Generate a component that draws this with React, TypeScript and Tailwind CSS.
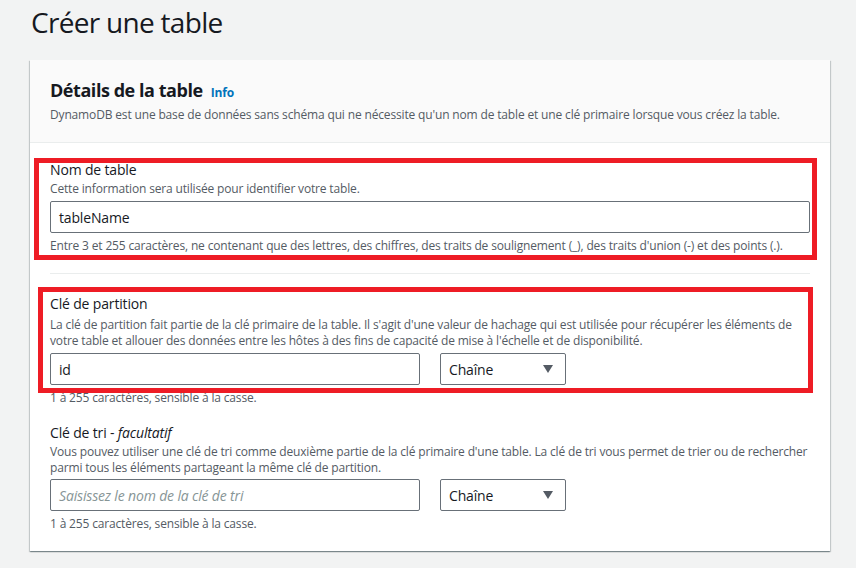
import React from "react";

const font = { fontFamily: '"Open Sans", "Noto Sans", sans-serif' };

function Caret() {
  return (
    <svg width="10" height="8" viewBox="0 0 10 8" className="shrink-0">
      <path d="M0 0 L10 0 L5 8 Z" fill="#545b64" />
    </svg>
  );
}

function Select() {
  return (
    <div className="ml-5 flex h-[32px] w-[126px] items-center justify-between rounded-[2px] border border-[#687078] bg-white pl-[8px] pr-[12px] text-[14px] text-[#16191f]">
      <span>Chaîne</span>
      <Caret />
    </div>
  );
}

export default function App() {
  return (
    <div
      className="relative h-[568px] w-[856px] overflow-hidden bg-[#f2f3f3] pl-[30px] tracking-[-0.01em] text-[#16191f]"
      style={font}
    >
      <h1 className="pl-[1px] text-[28px] leading-[44px] font-normal tracking-[-0.025em] text-[#16191f]">Créer une table</h1>

      <div className="mt-[16px] w-[800px] bg-white shadow-[0_1px_1px_0_rgba(0,28,36,0.3),1px_1px_1px_0_rgba(0,28,36,0.15),-1px_1px_1px_0_rgba(0,28,36,0.15)]">
        <div className="border-b border-[#eaeded] bg-[#fafafa] px-5 pt-[16px] pb-[19px]">
          <div className="flex items-baseline gap-[8px]">
            <h2 className="text-[18px] leading-[28px] font-bold tracking-[-0.025em] text-[#16191f]">Détails de la table</h2>
            <span className="text-[12px] font-bold text-[#0073bb]">Info</span>
          </div>
          <p className="mt-[3px] text-[12px] leading-[16px] tracking-[-0.013em] text-[#545b64]">
            DynamoDB est une base de données sans schéma qui ne nécessite qu'un nom de table et une clé primaire lorsque vous créez la table.
          </p>
        </div>

        <div className="px-5 pt-[16px] pb-[19px]">
          {/* Nom de table */}
          <div className="text-[14px] leading-[22px]">Nom de table</div>
          <p className="text-[12px] leading-[16px] text-[#545b64]">Cette information sera utilisée pour identifier votre table.</p>
          <div className="mt-[4px] flex h-[32px] w-[760px] items-center rounded-[2px] border border-[#687078] bg-white px-[8px] text-[14px]">
            tableName
          </div>
          <p className="mt-[5px] text-[12px] leading-[16px] text-[#545b64]">
            Entre 3 et 255 caractères, ne contenant que des lettres, des chiffres, des traits de soulignement (_), des traits d'union (-) et des points (.).
          </p>

          <div className="mt-[19px] h-px w-[760px] bg-[#eaeded]" />

          {/* Clé de partition */}
          <div className="mt-[19px] text-[14px] leading-[22px]">Clé de partition</div>
          <p className="mt-[2px] w-[760px] text-[12px] leading-[16px] text-[#545b64]">
            La clé de partition fait partie de la clé primaire de la table. Il s'agit d'une valeur de hachage qui est utilisée pour récupérer les éléments de
            <br />
            votre table et allouer des données entre les hôtes à des fins de capacité de mise à l'échelle et de disponibilité.
          </p>
          <div className="mt-[4px] flex">
            <div className="flex h-[32px] w-[370px] items-center rounded-[2px] border border-[#687078] bg-white px-[8px] text-[14px]">
              id
            </div>
            <Select />
          </div>
          <p className="mt-[5px] text-[12px] leading-[16px] text-[#545b64]">1 à 255 caractères, sensible à la casse.</p>

          {/* Clé de tri */}
          <div className="mt-[16px] text-[14px] leading-[22px]">
            Clé de tri - <i>facultatif</i>
          </div>
          <p className="w-[760px] text-[12px] leading-[16px] text-[#545b64]">
            Vous pouvez utiliser une clé de tri comme deuxième partie de la clé primaire d'une table. La clé de tri vous permet de trier ou de rechercher
            <br />
            parmi tous les éléments partageant la même clé de partition.
          </p>
          <div className="mt-[3px] flex">
            <div className="flex h-[32px] w-[370px] items-center rounded-[2px] border border-[#687078] bg-white px-[8px] text-[14px] italic text-[#879596]">
              Saisissez le nom de la clé de tri
            </div>
            <Select />
          </div>
          <p className="mt-[5px] text-[12px] leading-[16px] text-[#545b64]">1 à 255 caractères, sensible à la casse.</p>
        </div>
      </div>

      {/* annotation boxes */}
      <div className="absolute left-[34px] top-[158px] h-[102px] w-[783px] border-[5px] border-[#ee1c25]" />
      <div className="absolute left-[38px] top-[287px] h-[106px] w-[775px] border-[5px] border-[#ee1c25]" />
    </div>
  );
}
